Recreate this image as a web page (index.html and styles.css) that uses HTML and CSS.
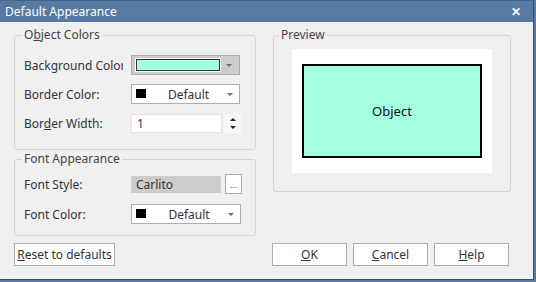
FILE: index.html
```html
<!DOCTYPE html>
<html lang="en">
<head>
    <meta charset="UTF-8">
    <title>Default Appearance</title>
    <link rel="stylesheet" href="styles.css">
</head>
<body>
<div class="frame">
<div class="window">
    <div class="titlebar">
        <span class="title">Default Appearance</span>
        <span class="close">&#x2715;</span>
    </div>
    <div class="content">
        <div class="left">
            <fieldset class="group group-colors">
                <legend>O<u>b</u>ject Colors</legend>
                <div class="row">
                    <label class="clip">Background Color</label>
                    <div class="combo combo-gray">
                        <span class="swatch"></span>
                        <span class="arrow"></span>
                    </div>
                </div>
                <div class="row">
                    <label>Border Color:</label>
                    <div class="combo">
                        <span class="chip"></span>
                        <span class="combo-text">Default</span>
                        <span class="arrow"></span>
                    </div>
                </div>
                <div class="row">
                    <label>Bor<u>d</u>er Width:</label>
                    <div class="spin">
                        <input type="text" class="field" value="1">
                        <div class="spin-btns">
                            <span class="up"></span>
                            <span class="down"></span>
                        </div>
                    </div>
                </div>
            </fieldset>
            <fieldset class="group group-font">
                <legend>Font Appearance</legend>
                <div class="row">
                    <label>Font Style:</label>
                    <div class="font-pick">
                        <span class="field field-gray">Carlito</span>
                        <button class="dots">...</button>
                    </div>
                </div>
                <div class="row">
                    <label>Font Color:</label>
                    <div class="combo">
                        <span class="chip"></span>
                        <span class="combo-text">Default</span>
                        <span class="arrow"></span>
                    </div>
                </div>
            </fieldset>
        </div>
        <fieldset class="group group-preview">
            <legend>Preview</legend>
            <div class="canvas">
                <div class="shape">Object</div>
            </div>
        </fieldset>
    </div>
    <div class="buttons">
        <button class="btn btn-reset"><u>R</u>eset to defaults</button>
        <div class="btn-group">
            <button class="btn"><u>O</u>K</button>
            <button class="btn"><u>C</u>ancel</button>
            <button class="btn"><u>H</u>elp</button>
        </div>
    </div>
</div>
</div>
</body>
</html>
```

FILE: styles.css
```css
body {
    margin: 0;
    font-family: "Noto Sans", sans-serif;
    font-size: 12px;
    color: #333;
}
.frame {
    width: 536px;
    height: 282px;
    box-sizing: border-box;
    padding: 0 2px 2px 0;
    background-color: #577aa2;
}
.window {
    height: 100%;
    box-sizing: border-box;
    background-color: #f0f0f0;
    border-right: 1px solid #31506f;
    border-bottom: 1px solid #31506f;
    display: flex;
    flex-direction: column;
}
.titlebar {
    height: 22px;
    box-sizing: border-box;
    border-top: 1px solid #44648a;
    background-color: #577aa2;
    color: #fff;
    display: flex;
    align-items: center;
    justify-content: space-between;
    padding: 0 12px 1px 5px;
    font-size: 12px;
}
.close {
    font-size: 12px;
    font-weight: bold;
}
.content {
    display: flex;
    padding: 6px 0 0 14px;
    gap: 17px;
}
.left {
    width: 242px;
    display: flex;
    flex-direction: column;
    gap: 2px;
}
.group {
    margin: 0;
    padding: 0;
    border: 1px solid #d5d5d5;
    border-radius: 3px;
    min-width: 0;
}
.group legend {
    margin-left: -2px;
    padding: 0 2px;
    line-height: 14px;
    color: #444;
}
.group-colors {
    padding: 13px 15px 16px 9px;
}
.group-font {
    padding: 8px 13px 11px 9px;
}
.row {
    display: flex;
    align-items: center;
    height: 20px;
    margin-bottom: 9px;
}
.group-font .row {
    margin-bottom: 10px;
}
.row:last-child {
    margin-bottom: 0;
}
.row label {
    width: 107px;
    flex: none;
    padding-top: 1px;
}
.clip {
    white-space: nowrap;
    overflow: hidden;
    width: 99px !important;
    margin-right: 8px;
}
.combo {
    width: 110px;
    height: 20px;
    box-sizing: border-box;
    border: 1px solid #adadad;
    background-color: #fff;
    display: flex;
    align-items: center;
    padding: 0 6px 0 4px;
}
.combo-gray {
    background-color: #cccccc;
    padding-right: 7px;
}
.swatch {
    width: 84px;
    height: 12px;
    box-sizing: border-box;
    border: 1px solid #333;
    outline: 1px solid #fff;
    background-color: #a3ffdf;
}
.chip {
    width: 10px;
    height: 9px;
    background-color: #000;
    margin-bottom: 2px;
}
.combo-text {
    flex: 1;
    text-align: center;
    padding-left: 4px;
}
.arrow {
    margin-left: auto;
    width: 0;
    height: 0;
    border-left: 3px solid transparent;
    border-right: 3px solid transparent;
    border-top: 3px solid #6d6d6d;
}
.spin {
    display: flex;
    align-items: center;
    width: 110px;
}
.field {
    width: 91px;
    height: 19px;
    box-sizing: border-box;
    border: 1px solid #e3e3e3;
    background-color: #fff;
    font: inherit;
    color: #333;
    padding: 0 5px;
    margin: 0;
    outline: none;
}
.spin-btns {
    width: 17px;
    height: 19px;
    margin-left: 2px;
    background-color: #f7f7f7;
    display: flex;
    flex-direction: column;
    align-items: center;
    justify-content: center;
    gap: 5px;
}
.up {
    width: 0;
    height: 0;
    border-left: 3px solid transparent;
    border-right: 3px solid transparent;
    border-bottom: 3px solid #222;
}
.down {
    width: 0;
    height: 0;
    border-left: 3px solid transparent;
    border-right: 3px solid transparent;
    border-top: 3px solid #222;
}
.font-pick {
    display: flex;
    align-items: center;
    width: 111px;
}
.field-gray {
    height: 17px;
    line-height: 17px;
    background-color: #cccccc;
    border: none;
    display: block;
}
.dots {
    width: 17px;
    height: 20px;
    margin-left: 4px;
    padding: 0;
    border: 1px solid #adadad;
    background-color: #fff;
    font: inherit;
    font-size: 9px;
    line-height: 20px;
    color: #555;
}
.group-preview {
    width: 238px;
    height: 164px;
    box-sizing: border-box;
    padding: 7px 0 0 0;
}
.group-preview legend {
    margin-left: 5px;
}
.canvas {
    width: 200px;
    height: 124px;
    box-sizing: border-box;
    margin: 0 auto;
    background-color: #fff;
    padding: 15px 10px;
}
.shape {
    height: 94px;
    box-sizing: border-box;
    border: 2px solid #000;
    background-color: #a3ffdf;
    display: flex;
    align-items: center;
    justify-content: center;
    color: #111;
    font-size: 13px;
}
.buttons {
    display: flex;
    justify-content: space-between;
    padding: 7px 24px 0 14px;
}
.btn-group {
    display: flex;
    gap: 6px;
}
.btn {
    width: 75px;
    height: 23px;
    margin: 0;
    padding: 0;
    border: 1px solid #adadad;
    background-color: #fff;
    font: inherit;
    color: #333;
}
.btn-reset {
    width: 101px;
}
```
